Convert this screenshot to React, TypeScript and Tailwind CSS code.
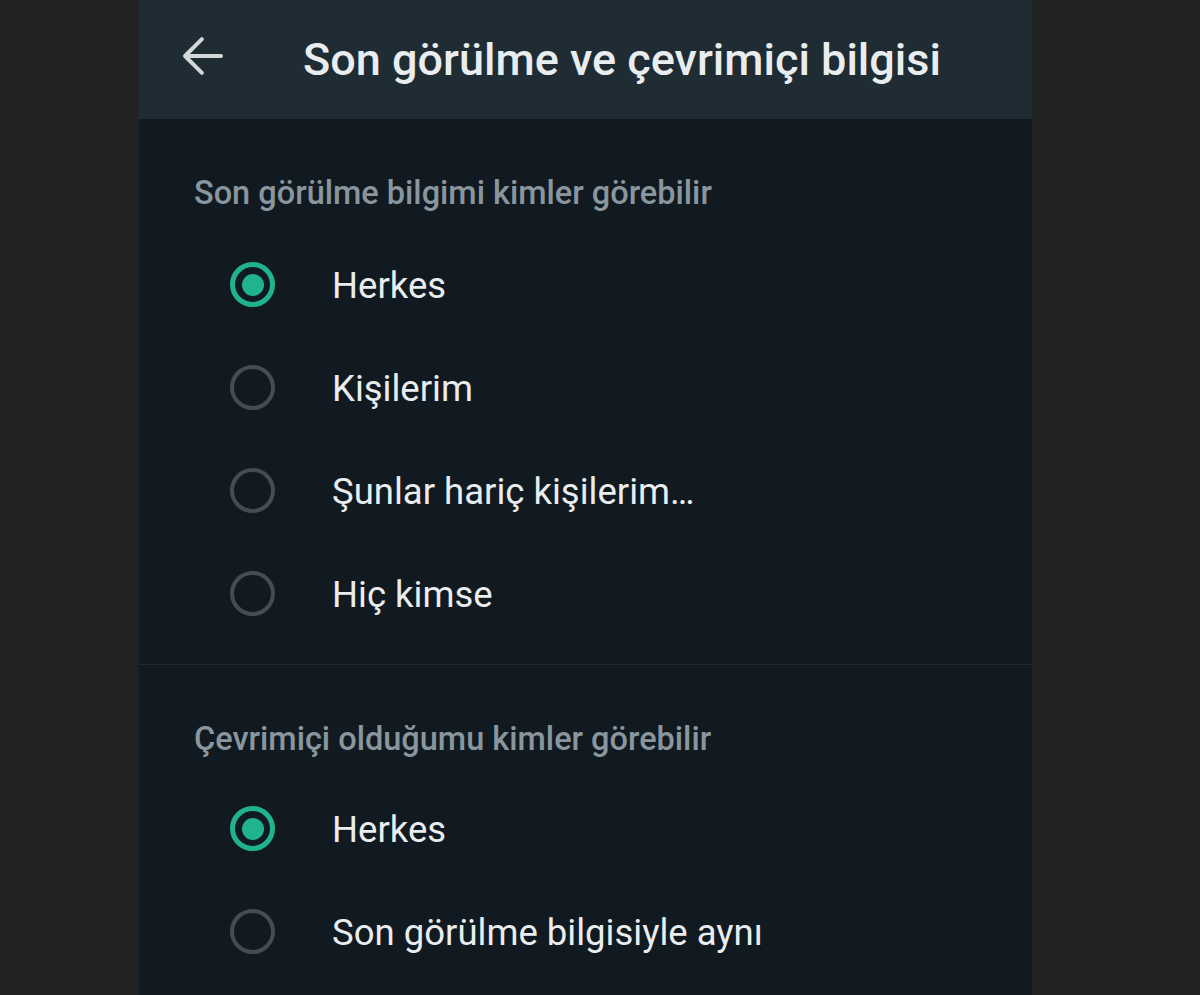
import React from "react";

type Option = { label: string; checked?: boolean };

const sections: { title: string; options: Option[] }[] = [
  {
    title: "Son görülme bilgimi kimler görebilir",
    options: [
      { label: "Herkes", checked: true },
      { label: "Kişilerim" },
      { label: "Şunlar hariç kişilerim…" },
      { label: "Hiç kimse" },
    ],
  },
  {
    title: "Çevrimiçi olduğumu kimler görebilir",
    options: [{ label: "Herkes", checked: true }, { label: "Son görülme bilgisiyle aynı" }],
  },
];

function Radio({ checked }: { checked?: boolean }) {
  return (
    <span
      className={
        checked
          ? "flex h-[45px] w-[45px] shrink-0 items-center justify-center rounded-full border-[5px] border-[#20b48e]"
          : "flex h-[45px] w-[45px] shrink-0 items-center justify-center rounded-full border-[4px] border-[#434d53]"
      }
    >
      {checked && <span className="h-[22px] w-[22px] rounded-full bg-[#20b48e]" />}
    </span>
  );
}

export default function App() {
  return (
    <div
      className="flex h-[995px] w-full overflow-hidden bg-[#222222] pl-[139px]"
      style={{ fontFamily: "Roboto, 'Noto Sans', sans-serif" }}
    >
      <div className="flex w-[893px] flex-col bg-[#111a21]">
        {/* header */}
        <div className="flex h-[119px] shrink-0 items-center bg-[#1f2c34] pl-[37px]">
          <svg width="54" height="54" viewBox="0 0 24 24" className="mb-[8px] text-[#d3d7da]">
            <path
              d="M20 12H4.5M11.5 4.5L4 12l7.5 7.5"
              fill="none"
              stroke="currentColor"
              strokeWidth="1.8"
              strokeLinecap="round"
              strokeLinejoin="round"
            />
          </svg>
          <h1 className="ml-[73px] text-[45px] font-medium leading-none text-[#e9edef]">
            Son görülme ve çevrimiçi bilgisi
          </h1>
        </div>

        {sections.map((s, i) => (
          <div
            key={i}
            className={i === 0 ? "border-b border-[#1f2a31] pt-[54px] pb-[19px]" : "pt-[54px]"}
          >
            <h2 className="pl-[55px] text-[32.5px] font-medium leading-[40px] text-[#8a969e]">{s.title}</h2>
            <div className={i === 0 ? "mt-[20px] flex flex-col" : "mt-[18px] flex flex-col"}>
              {s.options.map((o, j) => (
                <div key={j} className="flex h-[103px] items-center pl-[91px]">
                  <Radio checked={o.checked} />
                  <span className="ml-[57px] pt-[4px] text-[36.5px] leading-none text-[#e9edef]">{o.label}</span>
                </div>
              ))}
            </div>
          </div>
        ))}
      </div>
    </div>
  );
}
